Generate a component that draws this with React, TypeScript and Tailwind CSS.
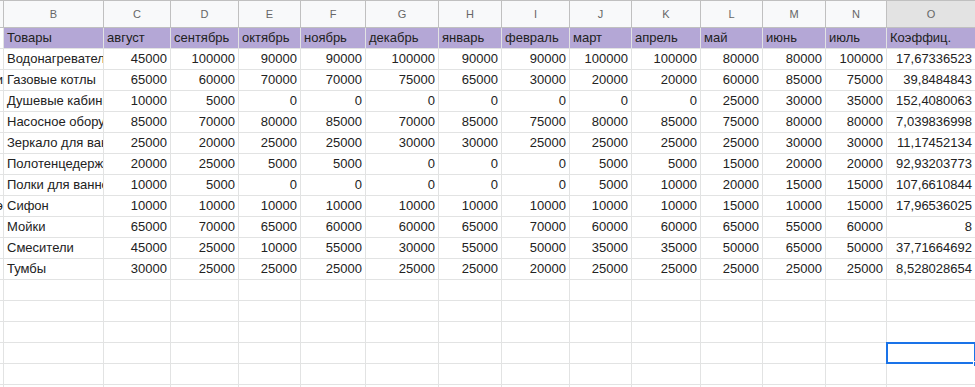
import React from "react";

const cols = [
  { key: "A", w: "w-[4px]" },
  { key: "B", w: "w-[100px]" },
  { key: "C", w: "w-[67px]" },
  { key: "D", w: "w-[68px]" },
  { key: "E", w: "w-[62px]" },
  { key: "F", w: "w-[65px]" },
  { key: "G", w: "w-[73px]" },
  { key: "H", w: "w-[63px]" },
  { key: "I", w: "w-[68px]" },
  { key: "J", w: "w-[62px]" },
  { key: "K", w: "w-[69px]" },
  { key: "L", w: "w-[62px]" },
  { key: "M", w: "w-[63px]" },
  { key: "N", w: "w-[61px]" },
  { key: "O", w: "w-[89px]" },
];

const months = [
  "август",
  "сентябрь",
  "октябрь",
  "ноябрь",
  "декабрь",
  "январь",
  "февраль",
  "март",
  "апрель",
  "май",
  "июнь",
  "июль",
];

const rows: { a: string; name: string; vals: number[]; k: string }[] = [
  { a: "", name: "Водонагреватели", vals: [45000, 100000, 90000, 90000, 100000, 90000, 90000, 100000, 100000, 80000, 80000, 100000], k: "17,67336523" },
  { a: "и", name: "Газовые котлы", vals: [65000, 60000, 70000, 70000, 75000, 65000, 30000, 20000, 20000, 60000, 85000, 75000], k: "39,8484843" },
  { a: "", name: "Душевые кабины", vals: [10000, 5000, 0, 0, 0, 0, 0, 0, 0, 25000, 30000, 35000], k: "152,4080063" },
  { a: "", name: "Насосное оборудование", vals: [85000, 70000, 80000, 85000, 70000, 85000, 75000, 80000, 85000, 75000, 80000, 80000], k: "7,039836998" },
  { a: "", name: "Зеркало для ванной", vals: [25000, 20000, 25000, 25000, 30000, 30000, 25000, 25000, 25000, 25000, 30000, 30000], k: "11,17452134" },
  { a: "", name: "Полотенцедержатели", vals: [20000, 25000, 5000, 5000, 0, 0, 0, 5000, 5000, 15000, 20000, 20000], k: "92,93203773" },
  { a: "", name: "Полки для ванной", vals: [10000, 5000, 0, 0, 0, 0, 0, 5000, 10000, 20000, 15000, 15000], k: "107,6610844" },
  { a: "э", name: "Сифон", vals: [10000, 10000, 10000, 10000, 10000, 10000, 10000, 10000, 10000, 15000, 10000, 15000], k: "17,96536025" },
  { a: "", name: "Мойки", vals: [65000, 70000, 65000, 60000, 60000, 65000, 70000, 60000, 60000, 65000, 55000, 60000], k: "8" },
  { a: "", name: "Смесители", vals: [45000, 25000, 10000, 55000, 30000, 55000, 50000, 35000, 35000, 50000, 65000, 50000], k: "37,71664692" },
  { a: "", name: "Тумбы", vals: [30000, 25000, 25000, 25000, 25000, 25000, 20000, 25000, 25000, 25000, 25000, 25000], k: "8,528028654" },
];

const base =
  "shrink-0 h-[21px] border-r border-b border-[#e2e3e3] flex items-end pb-[2px] overflow-hidden whitespace-nowrap";
const cell = `${base} px-[3px]`;
const aCell = `w-[4px] ${base} justify-end`;

export default function App() {
  return (
    <div className="w-[975px] h-[387px] overflow-hidden bg-white text-[13px] leading-[16px] text-[#222]" style={{ fontFamily: '"Liberation Sans", Arial, sans-serif' }}>
      {/* буквы колонок */}
      <div className="flex h-[28px] border-t border-[#c0c0c0]">
        {cols.map((c) => (
          <div
            key={c.key}
            className={`${c.w} shrink-0 border-r border-b border-[#c0c0c0] flex items-center justify-center text-[11px] text-[#666] ${c.key === "O" ? "bg-[#e3e3e3]" : "bg-[#f8f9fa]"}`}
          >
            {c.key === "A" ? "" : c.key}
          </div>
        ))}
      </div>

      {/* шапка */}
      <div className="flex">
        <div className={aCell} />
        <div className={`${cols[1].w} ${cell} bg-[#b4a7d6]`}>Товары</div>
        {months.map((m, i) => (
          <div key={m} className={`${cols[i + 2].w} ${cell} bg-[#b4a7d6]`}>
            {m}
          </div>
        ))}
        <div className={`${cols[14].w} ${cell} bg-[#b4a7d6]`}>Коэффиц.</div>
      </div>

      {rows.map((r) => (
        <div key={r.name} className="flex">
          <div className={aCell}>{r.a}</div>
          <div className={`${cols[1].w} ${cell}`}>{r.name}</div>
          {r.vals.map((v, i) => (
            <div key={i} className={`${cols[i + 2].w} ${cell} justify-end`}>
              {v}
            </div>
          ))}
          <div className={`${cols[14].w} ${cell} justify-end`}>{r.k}</div>
        </div>
      ))}

      {[0, 1, 2, 3, 4, 5].map((n) => (
        <div key={n} className="flex">
          {cols.map((c) =>
            c.key === "A" ? (
              <div key={c.key} className={aCell} />
            ) : (
              <div key={c.key} className={`${c.w} ${cell} ${c.key === "O" && n === 3 ? "relative overflow-visible" : ""}`}>
                {c.key === "O" && n === 3 && (
                  <>
                    <div className="absolute -top-px -left-px -right-px -bottom-px border-2 border-[#1a73e8]" />
                    <div className="absolute -right-[4px] -bottom-[4px] w-[6px] h-[6px] bg-[#1a73e8] border border-white" />
                  </>
                )}
              </div>
            )
          )}
        </div>
      ))}
    </div>
  );
}
